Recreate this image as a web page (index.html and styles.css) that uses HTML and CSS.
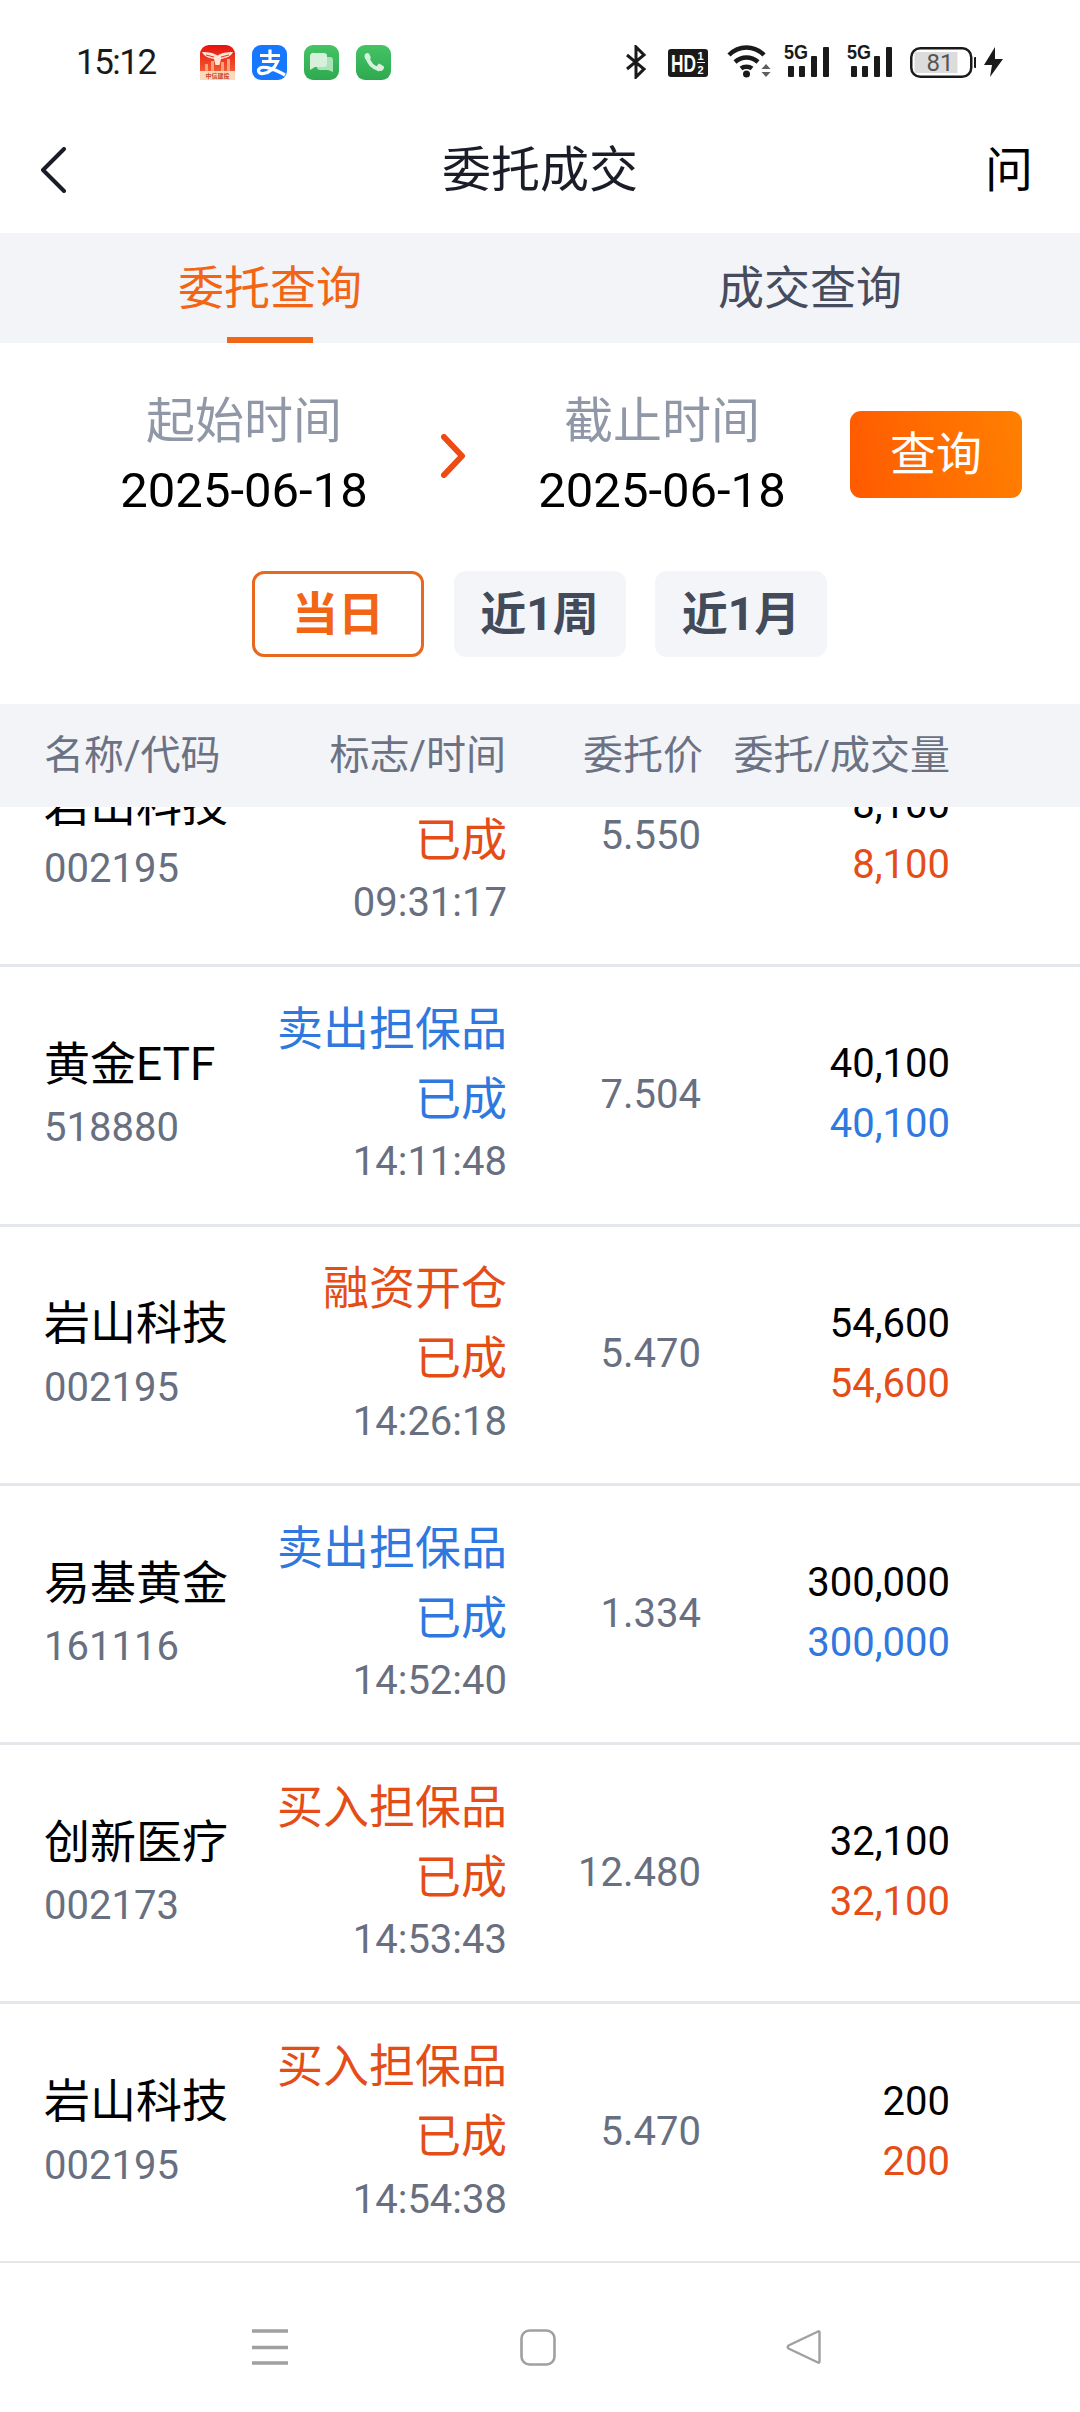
FILE: index.html
```html
<!DOCTYPE html>
<html lang="zh">
<head>
<meta charset="utf-8">
<title>委托成交</title>
<link rel="stylesheet" href="styles.css">
</head>
<body>
<div class="screen">
  <div class="statusbar">
    <span class="clock">15:12</span>
    <div class="apps">
      <svg class="app" viewBox="0 0 35 35"><defs><linearGradient id="r" x1="0" y1="0" x2="0" y2="1"><stop offset="0" stop-color="#e6120c"/><stop offset=".75" stop-color="#f25a34"/></linearGradient><linearGradient id="g1" x1="0" y1="0" x2="0" y2="1"><stop offset="0" stop-color="#44c465"/><stop offset="1" stop-color="#2ea950"/></linearGradient></defs><rect width="35" height="35" rx="9" fill="url(#r)"/><path d="M0 26h35v0 0 0 0 9H0z" fill="#fbd9bb"/><path d="M5 19h3v7H5zM11 16h3v10h-3zM21 17h3v9h-3zM27 14h3v12h-3z" fill="#f9a27e"/><path d="M2 7c6 0 12 1 15.500 3.500C21 8 27 7 33 7c-2 4-6 6-12 7l-1.500 6h-4L14 14C8 13 4 11 2 7z" fill="#fde6d3"/><path d="M6 10l8 2M29 10l-8 2" stroke="#e8342a" stroke-width="1" fill="none"/><text x="17.500" y="32.500" class="t-app">中信建投</text></svg>
      <svg class="app" viewBox="0 0 35 35"><rect width="35" height="35" rx="9" fill="#1677ff"/><path d="M8 10.500h20M18 4.500v11M10 16.500h15.500C23 23 17 28 11.500 28.500 8 29 6 27.500 6.500 25 8 20 19 22 33 30" fill="none" stroke="#fff" stroke-width="3.200"/></svg>
      <svg class="app" viewBox="0 0 35 35"><rect width="35" height="35" rx="9" fill="url(#g1)"/><path d="M18 12h8a3 3 0 0 1 3 3v12l-5-2h-8a3 3 0 0 1-3-3v-7a3 3 0 0 1 3-3z" fill="#a9e3b8"/><path d="M10 8h10a3 3 0 0 1 3 3v8a3 3 0 0 1-3 3h-9l-5 3V11a3 3 0 0 1 4-3z" fill="#d7f0dc"/></svg>
      <svg class="app" viewBox="0 0 35 35"><rect width="35" height="35" rx="9" fill="url(#g1)"/><path d="M11.500 12C12.500 18 17 22.500 23.500 24.500" fill="none" stroke="#d7f0dc" stroke-width="4"/><path d="M8.500 11c0-2 1.500-3 3-3 1 0 1.500 .5 2 1.500l1.500 3.500-4 2.500C9.500 14.500 8.500 13 8.500 11zM20 22l3-3.500 3.500 2c1 .5 1.500 1 1.500 2 0 1.500-1.500 3.500-3.500 3.500-1.500 0-3-1-4.500-4z" fill="#d7f0dc"/></svg>
    </div>
    <div class="sysicons">
      <svg class="i-bt" viewBox="0 0 22 34"><path d="M2 10l17 14-8 8V2l8 8L2 24" fill="none" stroke="#1a1a1a" stroke-width="3"/></svg>
      <svg class="i-hd" viewBox="0 0 40 28"><rect width="40" height="28" rx="3" fill="#1a1a1a"/><text x="3" y="23" class="t-hd" textLength="25" lengthAdjust="spacingAndGlyphs">HD</text><text x="29.500" y="11" class="t-sim">1</text><text x="29.500" y="25" class="t-sim">2</text><path d="M29 13.500h8" stroke="#fff" stroke-width="1"/></svg>
      <svg class="i-wifi" viewBox="0 0 45 34"><path d="M3 11C13 1 28 1 38 11M9 18c7-6 16-6 23 0M15 24.500c3-2.500 8-2.500 11 0" fill="none" stroke="#1a1a1a" stroke-width="4.500"/><circle cx="20.500" cy="30" r="3.500" fill="#1a1a1a"/><path d="M40 20l4.500 5h-9zM40 33l4.500-5h-9z" fill="#5e5e5e"/></svg>
      <svg class="i-sig" viewBox="0 -5 46 38"><text x="0" y="15" class="t-5g" textLength="24" lengthAdjust="spacingAndGlyphs">5G</text><rect x="4" y="22" width="6" height="11" rx="1" fill="#1a1a1a"/><rect x="15" y="22" width="6" height="11" rx="1" fill="#1a1a1a"/><rect x="27" y="12" width="6" height="21" rx="1" fill="#1a1a1a"/><rect x="39" y="3" width="6" height="30" rx="1" fill="#1a1a1a"/></svg>
      <svg class="i-sig" viewBox="0 -5 46 38"><text x="0" y="15" class="t-5g" textLength="24" lengthAdjust="spacingAndGlyphs">5G</text><rect x="4" y="22" width="6" height="11" rx="1" fill="#1a1a1a"/><rect x="15" y="22" width="6" height="11" rx="1" fill="#1a1a1a"/><rect x="27" y="12" width="6" height="21" rx="1" fill="#1a1a1a"/><rect x="39" y="3" width="6" height="30" rx="1" fill="#1a1a1a"/></svg>
      <svg class="i-batt" viewBox="0 0 66 31"><rect x="1.250" y="1.250" width="60" height="28.500" rx="9" fill="#fff" stroke="#1a1a1a" stroke-width="2.500"/><rect x="4.500" y="5" width="43" height="21" fill="#dcdcdc"/><text x="30" y="24" class="t-batt">81</text><rect x="64" y="10" width="2.500" height="11" rx="1" fill="#1a1a1a"/></svg>
      <svg class="i-bolt" viewBox="0 0 19 31"><path d="M11 0L0 18h8l-2 12L19 12h-8z" fill="#1a1a1a"/></svg>
    </div>
  </div>

  <header class="navbar">
    <svg class="back" viewBox="0 0 26 46"><path d="M24 2L3 23l21 21" fill="none" stroke="#1a1d28" stroke-width="4" stroke-linecap="round" stroke-linejoin="round"/></svg>
    <h1 class="title">委托成交</h1>
    <span class="help">问</span>
  </header>

  <nav class="tabs">
    <span class="tab tab-on">委托查询</span>
    <span class="tab">成交查询</span>
  </nav>

  <section class="filter">
    <div class="dates">
      <div class="date"><span class="date-label">起始时间</span><span class="date-value">2025-06-18</span></div>
      <svg class="arrow" viewBox="0 0 25 44"><path d="M3 3l18 19L3 41" fill="none" stroke="#ee4b14" stroke-width="6" stroke-linecap="round" stroke-linejoin="round"/></svg>
      <div class="date"><span class="date-label">截止时间</span><span class="date-value">2025-06-18</span></div>
      <button class="query">查询</button>
    </div>
    <div class="chips">
      <span class="chip chip-on">当日</span>
      <span class="chip">近1周</span>
      <span class="chip">近1月</span>
    </div>
  </section>

  <div class="thead">
    <span>名称/代码</span>
    <span class="r">标志/时间</span>
    <span class="r">委托价</span>
    <span class="r">委托/成交量</span>
  </div>

  <div class="list">
    <div class="rows">
      <div class="row red">
        <div class="c-name"><div class="name">岩山科技</div><div class="code">002195</div></div>
        <div class="c-flag"><div class="flag"></div><div class="state">已成</div><div class="time">09:31:17</div></div>
        <div class="c-price">5.550</div>
        <div class="c-qty"><div class="q1">8,100</div><div class="q2">8,100</div></div>
      </div>
      <div class="row blue">
        <div class="c-name"><div class="name">黄金ETF</div><div class="code">518880</div></div>
        <div class="c-flag"><div class="flag">卖出担保品</div><div class="state">已成</div><div class="time">14:11:48</div></div>
        <div class="c-price">7.504</div>
        <div class="c-qty"><div class="q1">40,100</div><div class="q2">40,100</div></div>
      </div>
      <div class="row red">
        <div class="c-name"><div class="name">岩山科技</div><div class="code">002195</div></div>
        <div class="c-flag"><div class="flag">融资开仓</div><div class="state">已成</div><div class="time">14:26:18</div></div>
        <div class="c-price">5.470</div>
        <div class="c-qty"><div class="q1">54,600</div><div class="q2">54,600</div></div>
      </div>
      <div class="row blue">
        <div class="c-name"><div class="name">易基黄金</div><div class="code">161116</div></div>
        <div class="c-flag"><div class="flag">卖出担保品</div><div class="state">已成</div><div class="time">14:52:40</div></div>
        <div class="c-price">1.334</div>
        <div class="c-qty"><div class="q1">300,000</div><div class="q2">300,000</div></div>
      </div>
      <div class="row red">
        <div class="c-name"><div class="name">创新医疗</div><div class="code">002173</div></div>
        <div class="c-flag"><div class="flag">买入担保品</div><div class="state">已成</div><div class="time">14:53:43</div></div>
        <div class="c-price">12.480</div>
        <div class="c-qty"><div class="q1">32,100</div><div class="q2">32,100</div></div>
      </div>
      <div class="row red">
        <div class="c-name"><div class="name">岩山科技</div><div class="code">002195</div></div>
        <div class="c-flag"><div class="flag">买入担保品</div><div class="state">已成</div><div class="time">14:54:38</div></div>
        <div class="c-price">5.470</div>
        <div class="c-qty"><div class="q1">200</div><div class="q2">200</div></div>
      </div>
    </div>
  </div>

  <footer class="sysnav">
    <svg class="n-menu" viewBox="0 0 36 36"><path d="M0 2h36M0 18.500h36M0 34h36" stroke="#a0a0a0" stroke-width="3.500" fill="none"/></svg>
    <svg class="n-home" viewBox="0 0 36 37"><rect x="1.500" y="1.500" width="33" height="34" rx="8" fill="none" stroke="#a0a0a0" stroke-width="2.600"/></svg>
    <svg class="n-back" viewBox="0 0 35 36"><path d="M32 2.500c1-.5 1.500 0 1.500 1v29c0 1-.5 1.500-1.500 1L2.500 19.500c-1-1-1-2 0-3z" fill="none" stroke="#a0a0a0" stroke-width="2.400" stroke-linejoin="round"/></svg>
  </footer>
</div>
</body>
</html>
```
FILE: styles.css
```css
* { box-sizing: border-box; }
html, body { margin: 0; padding: 0; background: #fff; }
body { font-family: Roboto, "Noto Sans CJK SC", sans-serif; color: #000; }
.screen { width: 1080px; height: 2412px; display: flex; flex-direction: column; overflow: hidden; background: #fff; }

/* status bar */
.statusbar { height: 82px; display: flex; align-items: flex-start; padding: 45px 0 0 76px; flex: none; }
.clock { font-size: 35px; line-height: 35px; color: #1a1a1a; width: 124px; letter-spacing: -1.5px; }
.apps { display: flex; gap: 17px; }
.app { width: 35px; height: 35px; display: block; }
.sysicons { display: flex; align-items: flex-start; margin-left: 234px; }
.sysicons svg { display: block; }
.i-bt { width: 22px; height: 34px; }
.i-hd { width: 40px; height: 28px; margin: 4px 0 0 21px; }
.i-wifi { width: 45px; height: 34px; margin: -1px 0 0 18px; }
.i-sig { width: 46px; height: 38px; margin: -6px 0 0 13px; }
.i-sig + .i-sig { margin-left: 17px; }
.i-batt { width: 66px; height: 31px; margin: 2px 0 0 17px; }
.i-bolt { width: 19px; height: 31px; margin: 2px 0 0 8px; }
.t-app { font: 700 6px "Noto Sans CJK SC", sans-serif; fill: #c8452a; text-anchor: middle; }
.t-hd { font: 700 24px "Liberation Sans", sans-serif; fill: #fff; }
.t-sim { font: 700 11px "Liberation Sans", sans-serif; fill: #fff; }
.t-5g { font: 700 20px "Liberation Sans", sans-serif; fill: #1a1a1a; }
.t-batt { font: 400 24px Roboto, sans-serif; fill: #555; text-anchor: middle; }

/* nav bar */
.navbar { height: 151px; display: grid; grid-template-columns: 1fr auto 1fr; align-items: center; padding: 27px 47px 0; flex: none; }
.back { width: 26px; height: 46px; display: block; margin: -2px 0 0 -7px; }
.title { margin: 0; font-size: 49px; font-weight: 400; line-height: 60px; color: #1a1d28; }
.help { font-size: 48px; font-weight: 400; line-height: 60px; color: #000; justify-self: end; margin-top: -1px; }

/* tabs */
.tabs { height: 110px; background: #f2f4f8; display: flex; flex: none; }
.tab { flex: 1; text-align: center; font-size: 46px; line-height: 111px; color: #464c5e; position: relative; }
.tab-on { color: #f26515; }
.tab-on::after { content: ""; position: absolute; left: 227px; width: 86px; bottom: 0; height: 6px; background: #f26515; }

/* filter */
.filter { height: 361px; padding: 48.500px 0 0 0; flex: none; }
.dates { display: flex; align-items: center; padding-left: 114px; }
.date { width: 260px; display: flex; flex-direction: column; align-items: center; }
.date-label { font-size: 49px; line-height: 60px; color: #9097a6; }
.date-value { font-size: 49px; line-height: 60px; margin-top: 9px; color: #000; }
.arrow { width: 25px; height: 44px; display: block; margin: 0 66px 0 67px; }
.query { width: 172px; height: 87px; margin: -3px 0 0 58px; border: 0; border-radius: 11px; background: linear-gradient(80deg, #ff5a00, #ff8000); color: #fff; font: 400 46px/87px Roboto, "Noto Sans CJK SC", sans-serif; padding: 0; }
.chips { display: flex; gap: 29.500px; margin-top: 50.500px; padding-left: 252px; }
.chip { width: 172px; height: 86px; border-radius: 12px; background: #f4f5f9; color: #434a5a; font-size: 46px; font-weight: 700; line-height: 86px; text-align: center; }
.chip-on { background: #fff; border: 3px solid #e8681f; color: #f26515; line-height: 80px; }

/* table */
.thead { display: grid; grid-template-columns: 230px 232px 197px 247px; padding: 0 0 8px 44px; height: 103px; background: #f2f4f8; align-items: center; font-size: 40px; color: #6b7283; flex: none; }
.row { display: grid; grid-template-columns: 230px 233px 194px 249px; padding-left: 44px; height: 259.300px; border-bottom: 3px solid #e4e7ec; align-items: center; }
.r { text-align: right; }
.list { flex: 1; min-height: 0; overflow: hidden; }
.rows { margin-top: -99px; }
.c-name { display: flex; flex-direction: column; }
.name { font-size: 46px; line-height: 60px; color: #000; margin-top: 1.500px; }
.code { font-size: 40px; line-height: 60px; margin-top: 4.500px; color: #686f80; }
.c-flag { text-align: right; font-size: 46px; margin-top: -4.500px; }
.flag, .state { line-height: 70px; min-height: 70px; }
.time { font-size: 40px; line-height: 60px; margin-top: -1.500px; color: #686f80; }
.c-price { text-align: right; font-size: 40px; color: #686f80; margin-top: -2px; }
.c-qty { text-align: right; font-size: 40px; margin-top: -2px; }
.q1 { line-height: 60px; color: #000; }
.q2 { line-height: 60px; }
.red .flag, .red .state, .red .q2 { color: #e54d17; }
.blue .flag, .blue .state, .blue .q2 { color: #2f78e0; }

/* system nav */
.sysnav { height: 149px; flex: none; display: flex; align-items: flex-start; padding: 66px 0 0 252px; }
.sysnav svg { display: block; }
.n-menu { width: 36px; height: 36px; }
.n-home { width: 36px; height: 37px; margin-left: 232px; }
.n-back { width: 35px; height: 36px; margin-left: 230px; }
```
